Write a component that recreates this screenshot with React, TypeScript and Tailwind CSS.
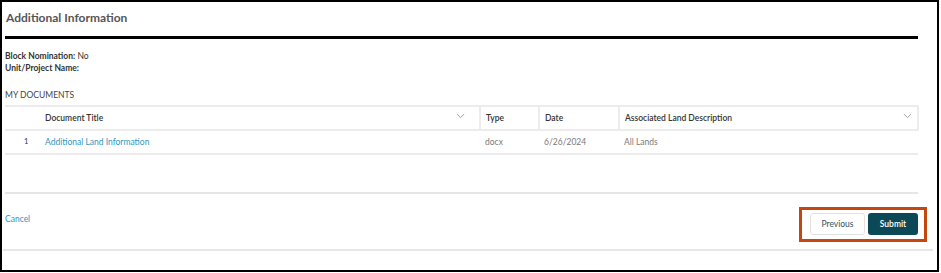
const FONT = { fontFamily: "Lato, 'Open Sans', sans-serif" };

function Chevron() {
  return (
    <svg width="9" height="6" viewBox="0 0 9 6" fill="none" className="shrink-0">
      <path d="M0.8 1 L4.5 4.6 L8.2 1" stroke="#9a9a9a" strokeWidth="0.9" />
    </svg>
  );
}

const DOCS = [{ n: 1, title: "Additional Land Information", type: "docx", date: "6/26/2024", land: "All Lands" }];

export default function App() {
  return (
    <div className="bg-white w-[941px] h-[273px]" style={FONT}>
      <div className="w-[939px] h-[272px] border-2 border-black flex flex-col">
        <div className="h-[34px] pl-[4px] pt-[7px] text-[12px] font-bold text-[#555] leading-[18px]">
          Additional Information
        </div>
        <div className="ml-[3px] w-[913px] h-[3px] bg-black" />

        <div className="pl-[3px] mt-[11px] text-[8.5px] leading-[12px] text-[#333]">
          <div>
            <span className="font-bold">Block Nomination:</span> No
          </div>
          <div className="font-bold">Unit/Project Name:</div>
        </div>

        <div className="pl-[3px] mt-[15px] text-[8.5px] leading-[12px] text-[#444] uppercase">My Documents</div>

        <table className="ml-[3px] mt-[4px] w-[913px] table-fixed border-collapse text-[8.5px]">
          <colgroup>
            <col className="w-[35px]" />
            <col className="w-[440px]" />
            <col className="w-[59px]" />
            <col className="w-[80px]" />
            <col className="w-[299px]" />
          </colgroup>
          <thead>
            <tr className="h-[24px] border-y-2 border-[#ececec] text-[#333] font-semibold text-left">
              <th />
              <th className="pl-[5px] pr-[14px] font-semibold">
                <div className="flex items-center justify-between">
                  <span>Document Title</span>
                  <span className="-mt-[5px]"><Chevron /></span>
                </div>
              </th>
              <th className="pl-[5px] font-semibold border-l-2 border-[#ececec]">Type</th>
              <th className="pl-[5px] font-semibold border-l-2 border-[#ececec]">Date</th>
              <th className="pl-[5px] pr-[5px] font-semibold border-x-2 border-[#ececec]">
                <div className="flex items-center justify-between">
                  <span>Associated Land Description</span>
                  <span className="-mt-[5px]"><Chevron /></span>
                </div>
              </th>
            </tr>
          </thead>
          <tbody>
            {DOCS.map((d) => (
              <tr key={d.n} className="h-[24px] border-b-2 border-[#ececec] text-[#7a7a7a]">
                <td className="pl-[19px] text-[7.5px] text-[#333]">{d.n}</td>
                <td className="pl-[5px] text-[#2f96bf]">{d.title}</td>
                <td className="pl-[5px]">{d.type}</td>
                <td className="pl-[5px]">{d.date}</td>
                <td className="pl-[5px]">{d.land}</td>
              </tr>
            ))}
          </tbody>
        </table>

        <div className="ml-[3px] mt-[37px] w-[913px] h-[2px] bg-[#e6e6e6]" />

        <div className="flex items-start justify-between pl-[3px] pr-[10px] mt-[13px]">
          <a className="mt-[6px] text-[8.5px] text-[#2f96bf]">Cancel</a>
          <div className="border-[3px] border-[#c4470f] pl-[8px] pr-[6px] pt-[3px] pb-[4px] flex gap-[3px]">
            <button className="w-[55px] h-[22px] rounded-[3px] border border-[#e2e2e2] bg-white text-[8.5px] text-[#2d5563]">
              Previous
            </button>
            <button className="w-[50px] h-[22px] rounded-[3px] bg-[#0c4957] text-[8.5px] text-white font-semibold">
              Submit
            </button>
          </div>
        </div>

        <div className="ml-[1px] mt-[7px] w-[930px] h-[2px] bg-[#e6e6e6]" />
      </div>
    </div>
  );
}
